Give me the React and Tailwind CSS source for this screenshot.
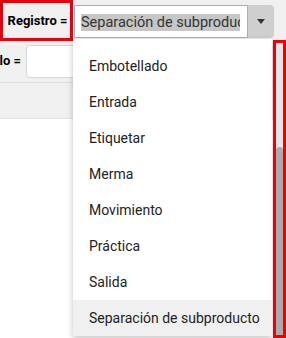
const options = [
  "Embotellado",
  "Entrada",
  "Etiquetar",
  "Merma",
  "Movimiento",
  "Práctica",
  "Salida",
  "Separación de subproducto",
];

export default function App() {
  return (
    <div className="relative w-[286px] h-[338px] overflow-hidden bg-white font-['Roboto',sans-serif] text-[#222]">
      {/* filter bar */}
      <div className="bg-[#f0f0f0] border-b border-[#dedede]">
        <div className="flex items-start h-[41px]">
          <div className="w-[73px] h-[41px] border-[3px] border-[#e8000b] flex items-center justify-center pl-[2px] text-[13px] font-bold text-black">
            Registro =
          </div>
          <div className="ml-[1px] mt-[5px] w-[174px] h-[33px] bg-white border border-[#8db8dd] flex items-center pl-[6px] pr-[7px]">
            <div className="overflow-hidden w-full">
              <span className="bg-[#c6c6c6] text-[14.5px] leading-[20px] whitespace-nowrap text-[#333]">
                Separación de subproducto
              </span>
            </div>
          </div>
          <div className="mt-[5px] w-[26px] h-[33px] bg-[#cfcfcf] rounded-r-[4px] flex items-center justify-center">
            <svg width="8" height="5" viewBox="0 0 8 5">
              <path d="M0 0h8L4 5z" fill="#333" />
            </svg>
          </div>
        </div>
        <div className="flex items-center h-[41px] pb-[1px]">
          <div className="w-[25px] overflow-hidden flex justify-end pr-[4px] text-[13px] font-bold text-black whitespace-nowrap">
            <span>lo =</span>
          </div>
          <div className="ml-[1px] w-[120px] h-[33px] bg-white border border-[#d6d6d6] rounded-[4px]" />
        </div>
      </div>
      <div className="h-[36px] bg-[#f0f0f0] border-b border-[#e2e2e2]" />

      {/* open dropdown list */}
      <div className="absolute left-[73px] top-[39px] w-[199px] h-[297px] bg-white pt-[9px] shadow-[0_2px_6px_rgba(0,0,0,0.25)]">
        {options.map((opt, i) => (
          <div
            key={opt}
            className={
              "h-[36px] flex items-center pl-[16px] text-[14px] whitespace-nowrap text-[#222] " +
              (i === options.length - 1 ? "bg-[#f0f0f0]" : "")
            }
          >
            {opt}
          </div>
        ))}
      </div>

      {/* scrollbar highlight */}
      <div className="absolute left-[273px] top-[40px] w-[13px] h-[298px] border-[3px] border-[#e8000b] bg-[#e6e6e6]">
        <div className="absolute left-0 right-0 top-[104px] bottom-0 bg-[#ababab] rounded-t-full" />
      </div>
    </div>
  );
}
